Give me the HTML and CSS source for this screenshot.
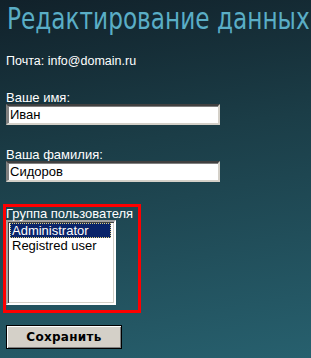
FILE: index.html
```html
<!DOCTYPE html>
<html lang="ru">
<head>
<meta charset="utf-8">
<title>Редактирование данных</title>
<link rel="stylesheet" href="styles.css">
</head>
<body>
<div class="page">
  <h1 class="title"><span class="title-text">Редактирование данных</span></h1>
  <p class="email">Почта: info@domain.ru</p>
  <label class="label label-name">Ваше имя:</label>
  <div class="input">Иван</div>
  <label class="label label-surname">Ваша фамилия:</label>
  <div class="input">Сидоров</div>
  <div class="group">
    <div class="group-label">Группа пользователя</div>
    <div class="listbox">
      <div class="option selected">Administrator</div>
      <div class="option">Registred user</div>
    </div>
  </div>
  <div class="actions">
    <button class="btn" type="button">Сохранить</button>
  </div>
</div>
</body>
</html>
```
FILE: styles.css
```css
html, body {
  margin: 0;
  padding: 0;
  height: 100%;
  overflow: hidden;
}
body {
  background: linear-gradient(170deg, #11212a 0%, #1b3d47 40%, #27606e 100%);
  color: #ffffff;
  font-family: "Liberation Sans", Arial, sans-serif;
  font-size: 13px;
}
.page {
  padding: 0 6px;
  display: flex;
  flex-direction: column;
  align-items: flex-start;
}
.title {
  margin: 0;
  padding-top: 1px;
  padding-left: 1px;
  font-family: "DejaVu Sans Condensed", "DejaVu Sans", sans-serif;
  font-weight: normal;
  font-size: 30px;
  line-height: 36px;
  color: #5aaec6;
  white-space: nowrap;
  height: 36px;
}
.title-text {
  display: inline-block;
  margin-right: -60px;
  transform: scaleX(0.86);
  transform-origin: left center;
}
.email {
  margin: 17px 0 0;
  font-size: 12.5px;
  line-height: 14px;
}
.label {
  display: block;
  line-height: 13px;
}
.label-name {
  margin-top: 23px;
}
.label-surname {
  margin-top: 23px;
}
.input {
  box-sizing: border-box;
  width: 214px;
  height: 21px;
  margin-top: 0;
  background: #fff;
  color: #000;
  font-size: 13px;
  line-height: 17px;
  padding-left: 2px;
  border-style: solid;
  border-width: 2px;
  border-color: #404040 #d4d0c8 #d4d0c8 #808080;
  box-shadow: inset 1px 1px 0 #808080;
}
.group {
  margin-top: 22px;
  margin-left: -3px;
  width: 132px;
  border: 3px solid #ff0000;
  padding-bottom: 5px;
}
.group-label {
  line-height: 13px;
  padding-left: 0;
}
.listbox {
  box-sizing: border-box;
  width: 110px;
  height: 85px;
  background: #fff;
  color: #000;
  font-size: 13px;
  border-style: solid;
  border-width: 2px;
  border-color: #a0a0a0 #ffffff #ffffff #a0a0a0;
  box-shadow: inset 1px 1px 0 #404040, inset -1px -1px 0 #d4d0c8;
  padding: 1px 3px 0 2px;
}
.option {
  line-height: 15px;
  padding-left: 2px;
  white-space: nowrap;
}
.option.selected {
  background: #0a246a;
  color: #fff;
  outline: 1px dotted #e0d080;
  outline-offset: -1px;
}
.actions {
  margin-top: 12px;
}
.btn {
  box-sizing: border-box;
  width: 116px;
  height: 24px;
  padding: 0;
  background: #d4d0c8;
  color: #000;
  font-family: "DejaVu Sans", Verdana, sans-serif;
  font-weight: bold;
  font-size: 12px;
  letter-spacing: 0.3px;
  border: 1px solid #000;
  box-shadow: inset 1px 1px 0 #ffffff, inset -1px -1px 0 #808080;
}
```
